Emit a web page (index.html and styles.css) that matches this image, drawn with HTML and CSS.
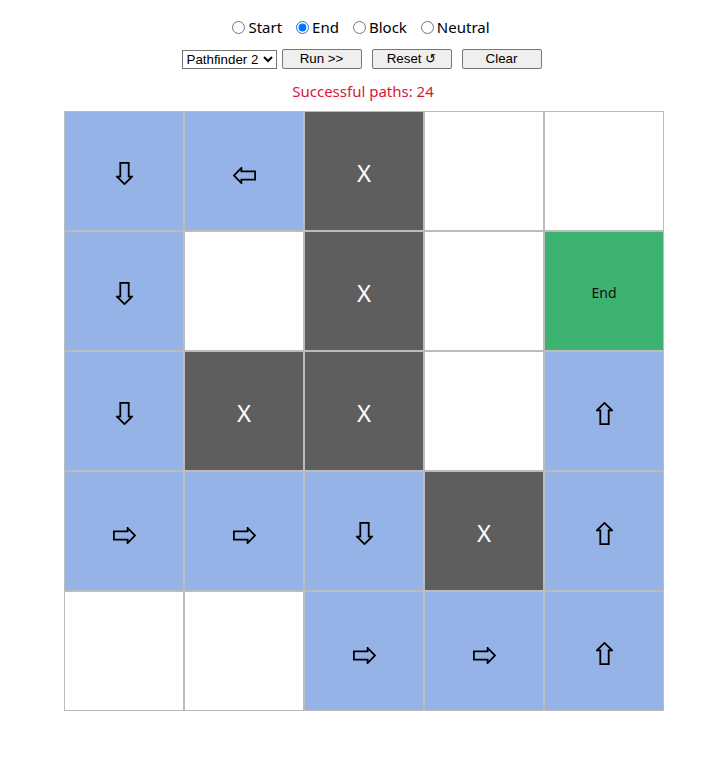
FILE: index.html
```html
<!DOCTYPE html>
<html lang="en">
<head>
<meta charset="utf-8">
<title>Pathfinder</title>
<link rel="stylesheet" href="styles.css">
</head>
<body>
<div class="app">
  <div class="modes">
    <label class="mode"><input type="radio" name="mode" class="radio">Start</label>
    <label class="mode"><input type="radio" name="mode" class="radio" checked>End</label>
    <label class="mode"><input type="radio" name="mode" class="radio">Block</label>
    <label class="mode"><input type="radio" name="mode" class="radio">Neutral</label>
  </div>
  <div class="controls">
    <select class="algo"><option>Pathfinder 2</option><option>Pathfinder 1</option></select>
    <button class="btn">Run &gt;&gt;</button>
    <button class="btn">Reset &#8634;</button>
    <button class="btn">Clear</button>
  </div>
  <div class="status">Successful paths: 24</div>
  <div class="grid">
    <div class="cell path"><svg class="arrow down" viewBox="0 0 17 23" width="17" height="23"><path d="M4.3 0.9H12.7V14.6H16.1L8.5 22.1L0.9 14.6H4.3Z"/></svg></div>
    <div class="cell path"><svg class="arrow left" viewBox="0 0 17 23" width="17" height="23"><path d="M4.3 0.9H12.7V14.6H16.1L8.5 22.1L0.9 14.6H4.3Z"/></svg></div>
    <div class="cell block">X</div>
    <div class="cell"></div>
    <div class="cell"></div>

    <div class="cell path"><svg class="arrow down" viewBox="0 0 17 23" width="17" height="23"><path d="M4.3 0.9H12.7V14.6H16.1L8.5 22.1L0.9 14.6H4.3Z"/></svg></div>
    <div class="cell"></div>
    <div class="cell block">X</div>
    <div class="cell"></div>
    <div class="cell end">End</div>

    <div class="cell path"><svg class="arrow down" viewBox="0 0 17 23" width="17" height="23"><path d="M4.3 0.9H12.7V14.6H16.1L8.5 22.1L0.9 14.6H4.3Z"/></svg></div>
    <div class="cell block">X</div>
    <div class="cell block">X</div>
    <div class="cell"></div>
    <div class="cell path"><svg class="arrow up" viewBox="0 0 17 23" width="17" height="23"><path d="M4.3 0.9H12.7V14.6H16.1L8.5 22.1L0.9 14.6H4.3Z"/></svg></div>

    <div class="cell path"><svg class="arrow right" viewBox="0 0 17 23" width="17" height="23"><path d="M4.3 0.9H12.7V14.6H16.1L8.5 22.1L0.9 14.6H4.3Z"/></svg></div>
    <div class="cell path"><svg class="arrow right" viewBox="0 0 17 23" width="17" height="23"><path d="M4.3 0.9H12.7V14.6H16.1L8.5 22.1L0.9 14.6H4.3Z"/></svg></div>
    <div class="cell path"><svg class="arrow down" viewBox="0 0 17 23" width="17" height="23"><path d="M4.3 0.9H12.7V14.6H16.1L8.5 22.1L0.9 14.6H4.3Z"/></svg></div>
    <div class="cell block">X</div>
    <div class="cell path"><svg class="arrow up" viewBox="0 0 17 23" width="17" height="23"><path d="M4.3 0.9H12.7V14.6H16.1L8.5 22.1L0.9 14.6H4.3Z"/></svg></div>

    <div class="cell"></div>
    <div class="cell"></div>
    <div class="cell path"><svg class="arrow right" viewBox="0 0 17 23" width="17" height="23"><path d="M4.3 0.9H12.7V14.6H16.1L8.5 22.1L0.9 14.6H4.3Z"/></svg></div>
    <div class="cell path"><svg class="arrow right" viewBox="0 0 17 23" width="17" height="23"><path d="M4.3 0.9H12.7V14.6H16.1L8.5 22.1L0.9 14.6H4.3Z"/></svg></div>
    <div class="cell path"><svg class="arrow up" viewBox="0 0 17 23" width="17" height="23"><path d="M4.3 0.9H12.7V14.6H16.1L8.5 22.1L0.9 14.6H4.3Z"/></svg></div>
  </div>
</div>
</body>
</html>
```

FILE: styles.css
```css
html, body {
  margin: 0;
  padding: 0;
  background: #ffffff;
}

body {
  font-family: "Noto Sans", "Open Sans", sans-serif;
  color: #000000;
}

.app {
  display: flex;
  flex-direction: column;
  align-items: center;
  padding-top: 17px;
}

.modes {
  display: flex;
  align-items: center;
  gap: 14px;
  font-size: 15px;
  line-height: 20px;
  height: 20px;
  margin-left: -4px;
}

.mode {
  display: flex;
  align-items: center;
}

.radio {
  width: 13px;
  height: 13px;
  margin: 0 3px 0 0;
}

.controls {
  display: flex;
  align-items: center;
  margin-top: 12px;
  height: 20px;
  margin-left: -3px;
}

.algo {
  width: 95px;
  height: 19px;
  margin-right: 5px;
  font-family: "Liberation Sans", Arial, sans-serif;
  font-size: 13.333px;
  border: 1px solid #767676;
  border-radius: 0;
  background: #ffffff;
  color: #000000;
  padding: 0;
}

.btn {
  width: 80px;
  height: 20px;
  margin-right: 10px;
  padding: 0 6px;
  font-family: "Liberation Sans", Arial, sans-serif;
  font-size: 13.333px;
  line-height: 18px;
  background: #efefef;
  border: 1px solid #767676;
  border-radius: 2px;
  color: #000000;
}

.btn:last-child {
  margin-right: 0;
}

.status {
  margin-top: 12px;
  font-size: 15px;
  line-height: 20px;
  color: #dc143c;
}

.grid {
  margin-top: 10px;
  margin-left: 2px;
  display: grid;
  grid-template-columns: repeat(5, 120px);
  grid-template-rows: repeat(5, 120px);
  width: 600px;
}

.cell {
  box-sizing: border-box;
  border: 1px solid #bcbcbc;
  background: #ffffff;
  display: flex;
  align-items: center;
  justify-content: center;
}

.path {
  background: #95b3e7;
}

.block {
  background: #5e5e5e;
  color: #ffffff;
  font-size: 24px;
  padding-top: 2px;
}

.end {
  background: #3cb371;
  color: #111111;
  font-size: 14px;
  padding-top: 2px;
}

.arrow path {
  fill: none;
  stroke: #000000;
  stroke-width: 1.8;
  stroke-linejoin: miter;
}

.arrow.down {
  transform: translateY(2px);
}

.arrow.up {
  transform: translateY(2px) rotate(180deg);
}

.arrow.left {
  transform: translateY(4px) rotate(90deg);
}

.arrow.right {
  transform: translateY(4px) rotate(-90deg);
}
```
